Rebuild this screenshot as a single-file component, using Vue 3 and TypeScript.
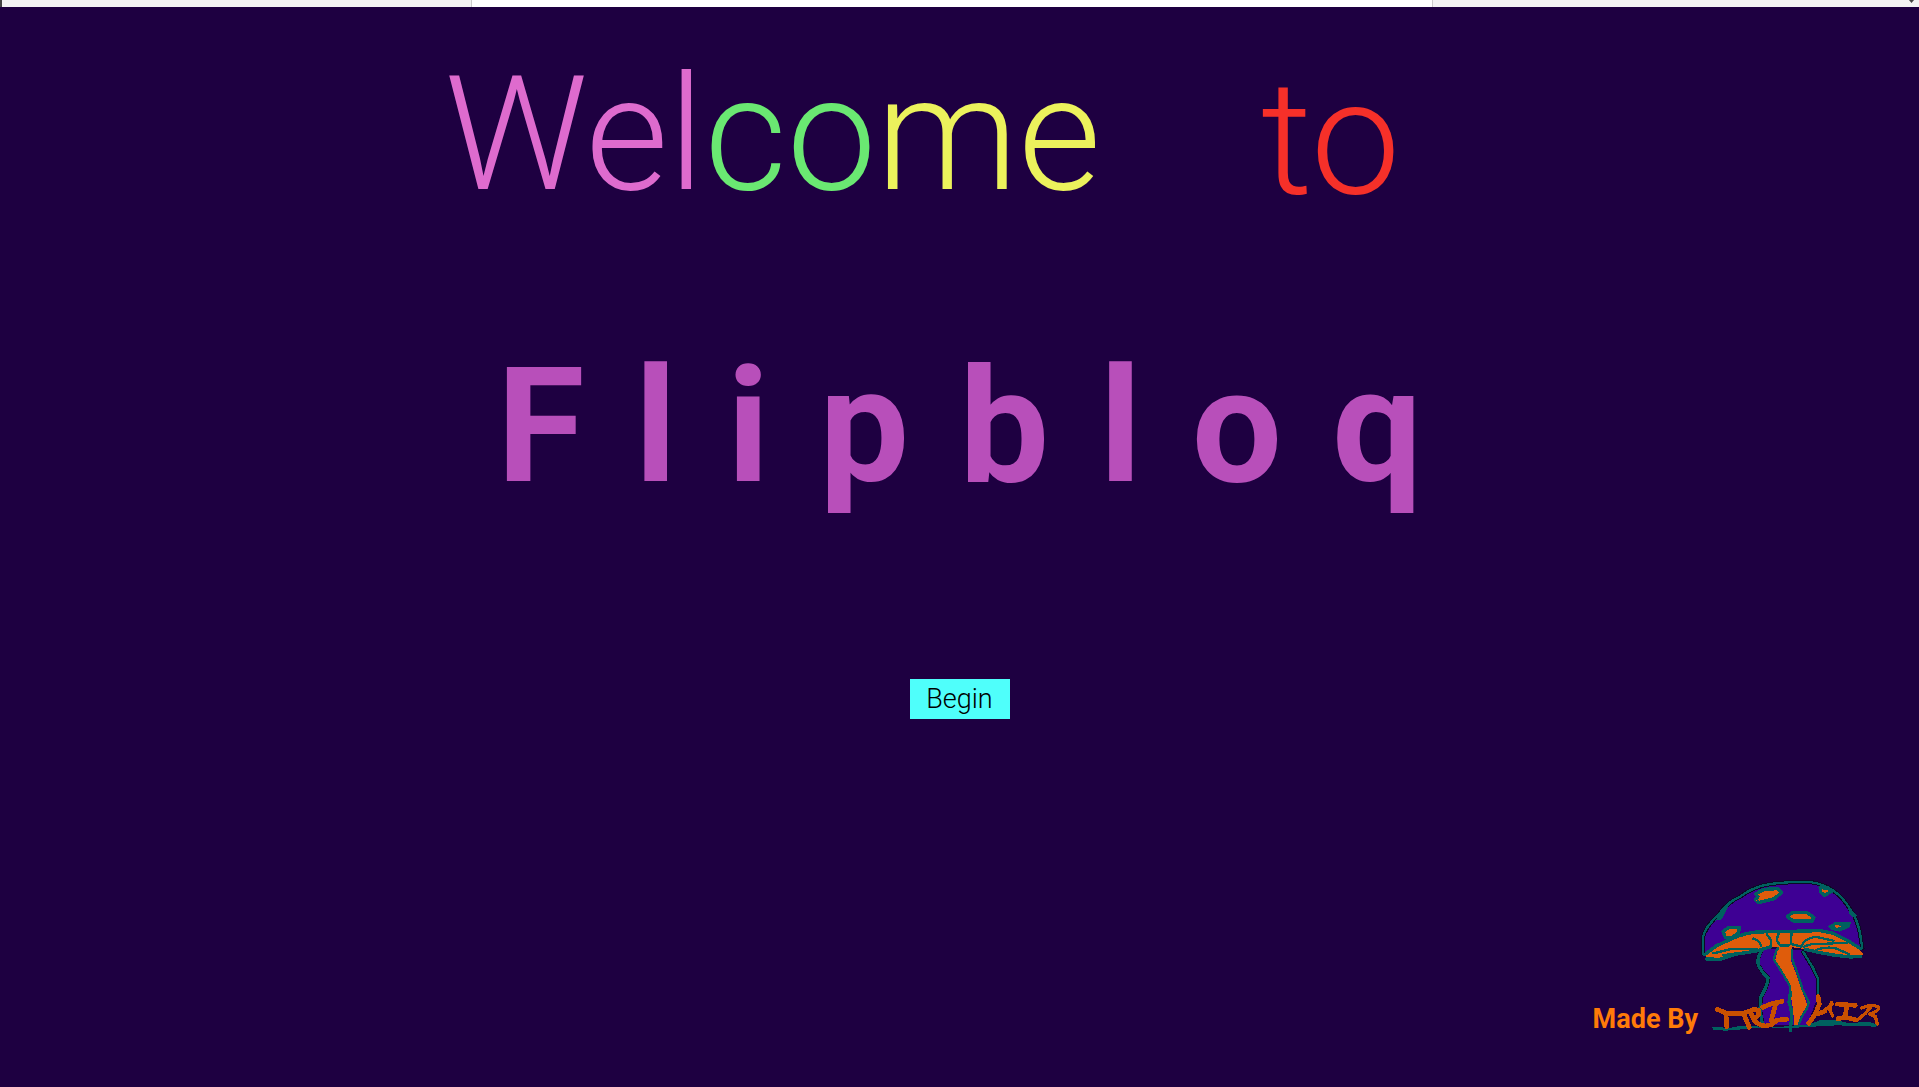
<script setup lang="ts">
interface Run {
  text: string
  tone: string
}

const welcome: Run[] = [
  { text: 'Wel', tone: 'orchid' },
  { text: 'co', tone: 'green' },
  { text: 'me', tone: 'yellow' },
]

const letters: string[] = [...'Flipbloq']
</script>

<template>
  <div class="page">
    <div class="strip" aria-hidden="true">
      <span class="strip-side strip-left"></span>
      <span class="strip-tab"></span>
      <span class="strip-side strip-right">
        <svg class="strip-mark" viewBox="0 0 5 3"><path d="M0 0H5L2.5 3Z" fill="#444" /></svg>
      </span>
    </div>

    <main>
      <h1 class="welcome">
        <span class="word"><span v-for="run in welcome" :key="run.text" :class="run.tone">{{ run.text }}</span></span>
        <span class="word red">to</span>
      </h1>
      <h2 class="name">
        <span v-for="(letter, i) in letters" :key="i">{{ letter }}</span>
      </h2>
      <button type="button" class="begin">Begin</button>
    </main>

    <footer>
      <span class="credit">Made By</span>
      <svg class="logo" viewBox="24 0 576 510" role="img" aria-label="Trihir mushroom logo">
        <g stroke-linejoin="round" stroke-linecap="round">
          <path class="ground" d="M66 471L96 472L110 476L150 468L190 467L230 474L300 468L372 458L390 450L440 450L470 458L540 457L566 464L556 470L440 466L300 474L200 474L110 482L70 480Z" />
          <path class="purple" d="M218 236L206 275Q212 300 236 325Q232 350 215 382L216 462L300 466L350 466L384 380L382 325L345 240Z" />
          <path class="stalk" d="M266 230L256 270L276 305L300 345L304 385L310 425L312 464L324 464L330 442L352 404L334 358L318 310L302 270L306 230Z" />

          <path class="edge" d="M218 236Q200 262 205 286Q216 308 234 324Q234 345 212 382L210 420L216 456M340 246L368 292L384 326L385 375" />
          <path class="line" d="M218 236Q200 262 205 286Q216 308 234 324Q234 345 212 382L210 420L216 456M300 375L297 396Q308 424 304 450L301 482" />
          <path class="line thin" d="M264 234Q252 255 252 270Q268 292 300 348L302 378M306 240Q302 262 316 292Q328 324 338 360L356 396Q356 412 336 438L328 460M340 246L368 292L384 326L385 375" />

          <path class="purple" d="M38 252L38 205Q45 170 85 135Q110 98 150 80Q190 50 240 42Q300 34 365 37Q400 42 430 62Q460 82 485 125Q502 150 510 190L518 240Q478 208 430 190Q400 181 390 181L300 184L200 185L130 202L80 227Z" />
          <path class="stalk" d="M46 258L80 232L130 205Q170 190 200 187L300 185L390 184L430 190L475 213L520 250L516 256L480 259L430 254L350 238L308 232L266 232L240 230L160 248L90 266L50 266Z" />
          <path class="edge" d="M40 252L38 205Q45 170 85 135Q110 98 150 80Q190 50 240 42Q300 34 365 37Q400 42 430 62Q460 82 485 125Q502 150 510 190L517 235" />
          <path class="line thin" d="M40 252L38 205Q45 170 85 135Q110 98 150 80Q190 50 240 42Q300 34 365 37Q400 42 430 62Q460 82 485 125Q502 150 510 190L517 235" />
          <path class="line" d="M44 254L80 227L130 204Q170 188 200 186L300 184L390 182L430 190L475 213L512 236" />
          <path class="line" d="M50 267L90 268L140 252L200 243L240 231M346 238L390 248L430 255L480 261L512 259" />
          <path class="line thin" d="M70 250L120 238L200 236M100 256L150 248M190 206Q208 210 214 228M230 192L244 212L242 230M266 190L260 210L270 226L298 226M305 188L302 222L335 230Q340 208 375 200L430 212M342 230Q370 218 390 222L470 218M378 240Q410 228 440 236L476 252" />

          <path class="ground" d="M76 152L104 106L124 90L96 148ZM474 112L502 138L490 142L478 132Z" />
          <path class="spot" d="M197 72L222 58L262 56L275 68L252 86L205 98L196 88L204 80Z" />
          <path class="spot" d="M99 184L116 173L148 172L146 188L126 202L106 202Z" />
          <path class="spot" d="M292 140L308 127L350 127L372 142L366 153L310 153Z" />
          <path class="spot" d="M390 52L416 56L424 64L404 76L393 68Z" />
          <path class="ground" d="M414 168L436 156L484 155L478 172L450 185L424 180Z" />
          <path d="M432 168L444 164L454 170L440 174Z" fill="#df5c0b" />

          <path class="letter" d="M82 418L96 424L108 430L160 430L192 418L204 420M108 430L110 470M162 434L178 472M182 428L190 446Q210 438 206 422M192 450Q206 466 226 468L244 464L262 450L290 448M218 412L242 402L276 394M256 406L244 450" />
          <path class="letter" d="M384 380L388 402L376 432L356 460M384 432L404 424" />
          <path class="letter fine" d="M398 426L426 402M424 398L420 420L428 438M514 414Q548 400 566 412Q568 424 538 432L556 440L562 462M542 412L526 430L510 444L500 450" />
          <path class="letter" d="M442 402L466 404L496 406M470 408L466 438M444 446L466 442L500 450" />
        </g>
      </svg>
    </footer>
  </div>
</template>

<style>
body {
  margin: 0;
  background: #1e0041;
}
</style>

<style scoped>
.page {
  display: flex;
  flex-direction: column;
  min-height: 100vh;
  background: #1e0041;
  font-family: Roboto, sans-serif;
  font-weight: 300;
}
.strip {
  display: flex;
  height: 7px;
}
.strip-side {
  background: #f3f3f3;
}
.strip-left {
  box-sizing: border-box;
  width: 25%;
  max-width: 471px;
  border-left: 2px solid #444;
}
.strip-tab {
  box-sizing: border-box;
  flex: 1;
  background: #fff;
  border: solid #ccc;
  border-width: 0 1px;
}
.strip-right {
  display: flex;
  width: 486px;
  justify-content: flex-end;
}
.strip-mark {
  width: 5px;
  height: 3px;
  margin-right: 5px;
}
main {
  display: flex;
  flex: 1;
  flex-direction: column;
  align-items: center;
}
.welcome {
  display: flex;
  gap: 160px;
  margin: 34px 74px 0 0;
  font-size: 160px;
  font-weight: 300;
  line-height: 188px;
}
.name {
  display: flex;
  gap: 50px;
  margin: 100px 0 0;
  color: #b84fba;
  font-size: 160px;
  font-weight: 700;
  line-height: 188px;
}
.orchid {
  color: #de6bce;
}
.green {
  color: #6ae872;
}
.yellow {
  color: #ecf25c;
}
.red {
  padding-top: 4px;
  color: #f63029;
}
.begin {
  width: 100px;
  height: 40px;
  margin-top: 158px;
  padding: 0;
  border: 0;
  background: #4ffffb;
  color: #000;
  font: inherit;
  font-size: 27px;
  line-height: 40px;
}
footer {
  display: flex;
  justify-content: flex-end;
  align-items: flex-end;
  padding: 0 29px 47px 0;
}
.credit {
  margin-bottom: 3px;
  color: #ff7b08;
  font-size: 27px;
  font-weight: 700;
  line-height: 36px;
}
.logo {
  width: 192px;
  height: 170px;
  shape-rendering: crispEdges;
}
.purple {
  fill: #3e0094;
}
.stalk {
  fill: #df5c0b;
}
.ground {
  fill: #00615f;
}
.edge {
  fill: none;
  stroke: #0a0a24;
  stroke-width: 13;
}
.line {
  fill: none;
  stroke: #00615f;
  stroke-width: 10;
}
.thin {
  stroke-width: 7;
}
.spot {
  fill: #df5c0b;
  stroke: #00615f;
  stroke-width: 10;
}
.letter {
  fill: none;
  stroke: #c95000;
  stroke-width: 14;
}
.fine {
  stroke-width: 10;
}
</style>
